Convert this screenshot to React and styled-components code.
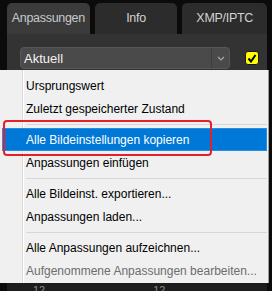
import React from 'react'
import styled, { createGlobalStyle } from 'styled-components'

const GlobalStyle = createGlobalStyle`
  body {
    margin: 0;
    background: #0b0b0b;
    font-family: "Liberation Sans", Arial, sans-serif;
  }
`

const Screen = styled.div`
  position: relative;
  width: 272px;
  height: 291px;
  overflow: hidden;
  background: #0b0b0b;
`

const TabBar = styled.div`
  display: flex;
  gap: 5px;
  height: 34px;
  padding: 3px 5px 0 7px;
  box-sizing: border-box;
`

const Tab = styled.div`
  width: ${(p) => p.$width}px;
  display: flex;
  align-items: center;
  justify-content: center;
  border-radius: 5px 5px 0 0;
  background: ${(p) => (p.$active ? '#3b3b3b' : '#2c2c2c')};
  color: ${(p) => (p.$active ? '#c6c9cc' : '#d2d2d2')};
  font-size: 12.5px;
  letter-spacing: -0.3px;
  padding-bottom: 1px;
`

const Panel = styled.div`
  margin-left: 7px;
  width: 260px;
  height: 257px;
  background: #333333;
  display: flex;
  flex-direction: column;
  justify-content: space-between;
`

const Toolbar = styled.div`
  display: flex;
  align-items: center;
  gap: 15px;
  padding: 13px 0 0 13px;
`

const Select = styled.div`
  width: 210px;
  height: 22px;
  box-sizing: border-box;
  display: flex;
  align-items: center;
  background: #4a4a4a;
  border: 1px solid #575757;
  border-radius: 4px;
  color: #f2f2f2;
  font-size: 13px;
`

const SelectValue = styled.span`
  flex: 1;
  padding-left: 3px;
`

const SelectArrow = styled.span`
  width: 17px;
  height: 100%;
  display: flex;
  align-items: center;
  justify-content: center;
  border-left: 1px solid #3e3e3e;
`

const Check = styled.div`
  width: 14px;
  height: 14px;
  box-sizing: border-box;
  display: flex;
  align-items: center;
  justify-content: center;
  background: #ffff00;
  border: 1px solid #1a1a1a;
  border-radius: 3px;
`

const Ruler = styled.div`
  display: flex;
  gap: 108px;
  height: 8px;
  padding-left: 26px;
  background: #1c1c1c;
  color: #8a8a8a;
  font-size: 11px;
  line-height: 15px;
  overflow: hidden;
`

const Menu = styled.div`
  position: absolute;
  left: 0;
  top: 70px;
  width: 269px;
  height: 213px;
  box-sizing: border-box;
  padding: 4px 1px 0 2px;
  background: #f0f0f0;
  border-right: 1px solid #a0a0a0;
  background-image: linear-gradient(#d9d9d9, #d9d9d9), linear-gradient(#ffffff, #ffffff);
  background-size: 1px 100%, 1px 100%;
  background-position: 22px 0, 23px 0;
  background-repeat: no-repeat;
`

const Item = styled.div`
  height: 23px;
  box-sizing: border-box;
  display: flex;
  align-items: center;
  padding-left: 24px;
  font-size: 12px;
  color: ${(p) => (p.$disabled ? '#6d6d6d' : '#000000')};
  ${(p) =>
    p.$active &&
    `
    background: #0078d7;
    border: 1px solid #2a8ee0;
    padding-left: 23px;
    color: #ffffff;
  `}
`

const Separator = styled.div`
  height: 8px;
  display: flex;
  align-items: center;
  padding-left: 24px;

  &::after {
    content: '';
    flex: 1;
    height: 1px;
    background: #d7d7d7;
  }
`

const Callout = styled.div`
  position: absolute;
  left: 3px;
  top: 120px;
  width: 209px;
  height: 36px;
  box-sizing: border-box;
  border: 2px solid #e3202b;
  border-radius: 4px;
`

const menu = [
  { label: 'Ursprungswert' },
  { label: 'Zuletzt gespeicherter Zustand' },
  { sep: true },
  { label: 'Alle Bildeinstellungen kopieren', active: true },
  { label: 'Anpassungen einfügen' },
  { sep: true },
  { label: 'Alle Bildeinst. exportieren...' },
  { label: 'Anpassungen laden...' },
  { sep: true },
  { label: 'Alle Anpassungen aufzeichnen...' },
  { label: 'Aufgenommene Anpassungen bearbeiten...', disabled: true },
]

export default function App() {
  return (
    <>
      <GlobalStyle />
      <Screen>
        <TabBar>
          <Tab $width={83} $active>Anpassungen</Tab>
          <Tab $width={83}>Info</Tab>
          <Tab $width={85}>XMP/IPTC</Tab>
        </TabBar>
        <Panel>
          <Toolbar>
            <Select>
              <SelectValue>Aktuell</SelectValue>
              <SelectArrow>
                <svg width="8" height="5" viewBox="0 0 8 5">
                  <path d="M1 1l3 3 3-3" fill="none" stroke="#a8a8a8" strokeWidth="1.2" />
                </svg>
              </SelectArrow>
            </Select>
            <Check>
              <svg width="10" height="9" viewBox="0 0 10 9">
                <path d="M1.5 4.5l2.5 3 4.5-6.5" fill="none" stroke="#000" strokeWidth="2" />
              </svg>
            </Check>
          </Toolbar>
          <Ruler>
            <span>12</span>
            <span>12</span>
          </Ruler>
        </Panel>
        <Menu>
          {menu.map((m, i) =>
            m.sep ? (
              <Separator key={i} />
            ) : (
              <Item key={i} $active={m.active} $disabled={m.disabled}>
                {m.label}
              </Item>
            )
          )}
        </Menu>
        <Callout />
      </Screen>
    </>
  )
}
